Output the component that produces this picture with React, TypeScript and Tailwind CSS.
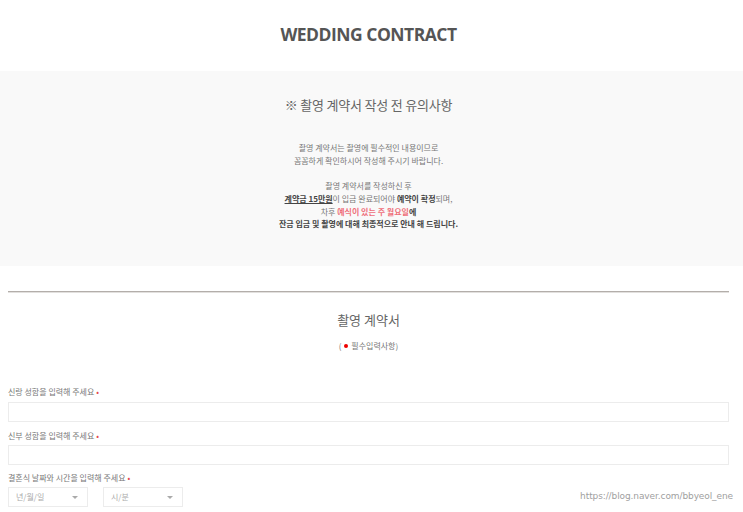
import React from 'react';

const kr = { fontFamily: '"Noto Sans CJK KR", "Noto Sans", sans-serif' };

function Label({ text }: { text: string }) {
  return (
    <p className="text-[8px] leading-[12px] text-[#777]" style={kr}>
      {text} <span className="text-[#e5484d]">•</span>
    </p>
  );
}

function Select({ placeholder }: { placeholder: string }) {
  return (
    <div className="flex h-[20px] w-[80px] items-center justify-between border border-[#ececec] bg-white pl-[7px] pr-[9px]">
      <span className="text-[8px] text-[#aaa]" style={kr}>{placeholder}</span>
      <span className="h-0 w-0 border-x-[3px] border-t-[3px] border-x-transparent border-t-[#aaa]" />
    </div>
  );
}

export default function App() {
  return (
    <div className="relative h-[512px] w-full overflow-hidden bg-white" style={kr}>
      {/* Header */}
      <div className="flex h-[70px] items-center justify-center pl-[8px] pr-[14px] pb-[1px]">
        <h1
          className="text-[17.5px] font-bold tracking-[-0.5px] text-[#555]"
          style={{ fontFamily: '"Open Sans", "Noto Sans", sans-serif' }}
        >
          WEDDING CONTRACT
        </h1>
      </div>

      {/* Notice */}
      <div className="mt-[1px] h-[195px] bg-[#f9f9f9] pl-[8px] pr-[14px] pt-[24px] text-center">
        <h2 className="text-[13px] leading-[20px] tracking-[-0.2px] text-[#666]">※ 촬영 계약서 작성 전 유의사항</h2>
        <div className="mt-[27px] text-[8px] leading-[12.7px] text-[#777]">
          <p>촬영 계약서는 촬영에 필수적인 내용이므로</p>
          <p>꼼꼼하게 확인하시어 작성해 주시기 바랍니다.</p>
          <p>&nbsp;</p>
          <p>촬영 계약서를 작성하신 후</p>
          <p>
            <b className="text-[#444] underline">계약금 15만원</b>이 입금 완료되어야{' '}
            <b className="text-[#444]">예약이 확정</b>되며,
          </p>
          <p>
            차후 <b className="text-[#ef6f7a]">예식이 있는 주 월요일</b>
            <b className="text-[#444]">에</b>
          </p>
          <p className="font-bold text-[#444]">잔금 입금 및 촬영에 대해 최종적으로 안내 해 드립니다.</p>
        </div>
      </div>

      {/* Form */}
      <div className="ml-[8px] mr-[14px] pt-[25px]">
        <div className="h-[2px] border-t border-[#b3aeaa] bg-[#e2e0de]" />
        <h3 className="mt-[17px] text-center text-[13px] leading-[20px] text-[#666]">촬영 계약서</h3>
        <p className="mt-[10px] flex items-center justify-center text-[8px] leading-[12px] text-[#777]">
          (<span className="mx-[2px] inline-block h-[4px] w-[4px] rounded-full bg-[#e00]" />
          &nbsp;필수입력사항)
        </p>

        <div className="mt-[34px]">
          <Label text="신랑 성함을 입력해 주세요" />
          <div className="mt-[4px] h-[20px] border border-[#ececec] bg-white" />
        </div>
        <div className="mt-[8px]">
          <Label text="신부 성함을 입력해 주세요" />
          <div className="mt-[3px] h-[20px] border border-[#ececec] bg-white" />
        </div>
        <div className="mt-[7px]">
          <Label text="결혼식 날짜와 시간을 입력해 주세요" />
          <div className="mt-[3px] flex gap-[15px]">
            <Select placeholder="년/월/일" />
            <Select placeholder="시/분" />
          </div>
        </div>
      </div>

      {/* Watermark */}
      <span
        className="absolute bottom-[9px] right-[10px] text-[9px] tracking-[-0.1px] text-[#a0a0a0]"
        style={{ fontFamily: '"DejaVu Sans", sans-serif' }}
      >
        https://blog.naver.com/bbyeol_ene
      </span>
    </div>
  );
}
